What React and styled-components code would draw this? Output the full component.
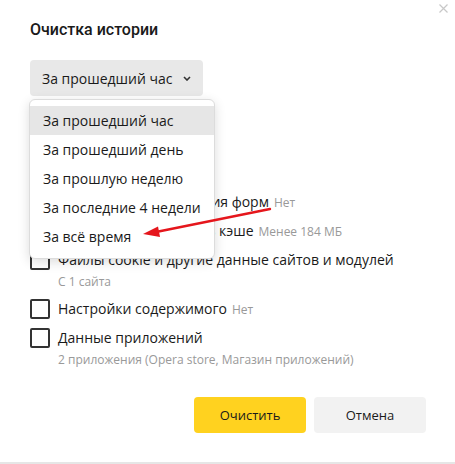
import React from "react";
import styled, { createGlobalStyle } from "styled-components";

const GlobalStyle = createGlobalStyle`
  html, body {
    margin: 0;
    padding: 0;
    background: #ffffff;
  }
  body {
    font-family: "Open Sans", "Noto Sans", sans-serif;
    color: #1a1a1a;
  }
`;

const periods = [
  "За прошедший час",
  "За прошедший день",
  "За прошлую неделю",
  "За последние 4 недели",
  "За всё время",
];

const items = [
  { label: "Просмотры", sub: "Более 2 тыс. адресов" },
  { label: "Загрузки", note: "Нет" },
  { label: "Данные автозаполнения форм", note: "Нет" },
  { label: "Файлы, сохранённые в кэше", note: "Менее 184 МБ" },
  { label: "Файлы cookie и другие данные сайтов и модулей", sub: "С 1 сайта" },
  { label: "Настройки содержимого", note: "Нет" },
  { label: "Данные приложений", sub: "2 приложения (Opera store, Магазин приложений)" },
];

function App() {
  return (
    <>
      <GlobalStyle />
      <Dialog>
        <CloseButton aria-label="Закрыть">
          <svg width="9" height="9" viewBox="0 0 9 9">
            <path d="M0.5 0.5 L8.5 8.5 M8.5 0.5 L0.5 8.5" stroke="#c8c8c8" strokeWidth="1.2" />
          </svg>
        </CloseButton>

        <Title>Очистка истории</Title>

        <SelectButton>
          За прошедший час
          <svg width="8" height="5" viewBox="0 0 8 5">
            <path d="M1 1 L4 4 L7 1" fill="none" stroke="#333" strokeWidth="1.6" />
          </svg>
        </SelectButton>

        <List>
          {items.map((item) => (
            <Item key={item.label}>
              <Row>
                <Checkbox />
                <Label>
                  {item.label}
                  {item.note && <Note>{item.note}</Note>}
                </Label>
              </Row>
              {item.sub && <Sub>{item.sub}</Sub>}
            </Item>
          ))}
        </List>

        <Actions>
          <Button $primary>Очистить</Button>
          <Button>Отмена</Button>
        </Actions>

        <Menu>
          {periods.map((p, i) => (
            <MenuItem key={p} $active={i === 0}>
              {p}
            </MenuItem>
          ))}
        </Menu>

        <Pointer width="130" height="34" viewBox="0 0 130 34">
          <line x1="128" y1="2" x2="14" y2="25" stroke="#e5161c" strokeWidth="2.4" strokeLinecap="round" />
          <path d="M1 27 L16 19.5 L18 30 Z" fill="#e5161c" />
        </Pointer>
      </Dialog>
    </>
  );
}

const Dialog = styled.div`
  position: relative;
  box-sizing: border-box;
  height: 464px;
  padding: 20px 29px 0 30px;
  border-bottom: 2px solid #e6e6e6;
  display: flex;
  flex-direction: column;
`;

const CloseButton = styled.div`
  position: absolute;
  top: 4px;
  right: 7px;
  width: 9px;
  height: 9px;
  line-height: 0;
`;

const Title = styled.div`
  font-family: Roboto, "Open Sans", sans-serif;
  font-size: 16px;
  font-weight: 500;
  line-height: 20px;
  color: #1a1a1a;
`;

const SelectButton = styled.div`
  margin-top: 20px;
  align-self: flex-start;
  box-sizing: border-box;
  width: 173px;
  height: 36px;
  padding: 0 12px;
  display: flex;
  align-items: center;
  justify-content: space-between;
  background: #e8e8e8;
  border-radius: 4px;
  font-size: 14px;
  color: #1a1a1a;

  svg {
    margin-top: 1px;
  }
`;

const List = styled.div`
  margin-top: 13px;
  display: flex;
  flex-direction: column;
`;

const Item = styled.div`
  display: flex;
  flex-direction: column;
`;

const Row = styled.div`
  height: 29px;
  display: flex;
  align-items: center;
  gap: 8px;
`;

const Checkbox = styled.span`
  box-sizing: border-box;
  width: 20px;
  height: 20px;
  flex: none;
  border: 2px solid #333;
  border-radius: 2px;
`;

const Label = styled.span`
  font-size: 14px;
  color: #1a1a1a;
  white-space: nowrap;
`;

const Note = styled.span`
  margin-left: 5px;
  font-size: 12px;
  color: #999;
`;

const Sub = styled.div`
  padding-left: 28px;
  height: 16px;
  line-height: 16px;
  margin-bottom: 4px;
  font-size: 12px;
  color: #999;
  white-space: nowrap;
`;

const Actions = styled.div`
  margin-top: 25px;
  display: flex;
  justify-content: flex-end;
  gap: 8px;
`;

const Button = styled.div`
  width: 112px;
  height: 36px;
  display: flex;
  align-items: center;
  justify-content: center;
  border-radius: 4px;
  font-size: 13px;
  color: #1a1a1a;
  background: ${(p) => (p.$primary ? "#ffd21f" : "#f2f2f2")};
`;

const Menu = styled.div`
  position: absolute;
  left: 29px;
  top: 99px;
  box-sizing: border-box;
  width: 186px;
  padding: 6px 0 7px;
  background: #fff;
  border: 1px solid #dcdcdc;
  border-radius: 6px;
  box-shadow: 0 3px 12px rgba(0, 0, 0, 0.14);
`;

const MenuItem = styled.div`
  height: 29px;
  padding-left: 13px;
  display: flex;
  align-items: center;
  font-size: 14px;
  color: #1a1a1a;
  background: ${(p) => (p.$active ? "#e6e6e6" : "transparent")};
`;

const Pointer = styled.svg`
  position: absolute;
  left: 142px;
  top: 207px;
`;

export default App;
